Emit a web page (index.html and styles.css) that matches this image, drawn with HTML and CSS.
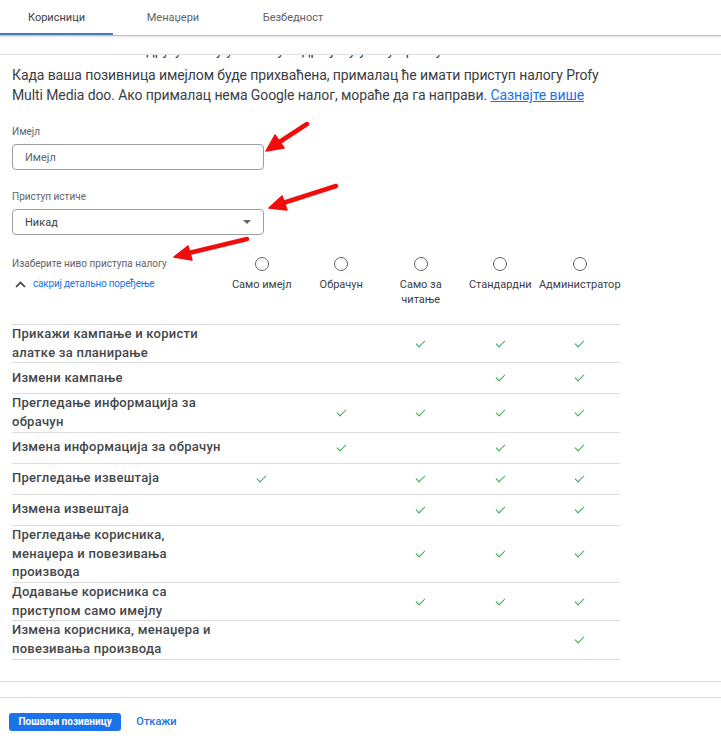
FILE: index.html
```html
<!DOCTYPE html>
<html lang="sr">
<head>
    <meta charset="UTF-8">
    <meta name="viewport" content="width=device-width, initial-scale=1.0">
    <title>Корисници</title>
    <link rel="stylesheet" href="styles.css">
</head>
<body>

    <div class="tabs">
        <div class="tab active">Корисници</div>
        <div class="tab">Менаџери</div>
        <div class="tab">Безбедност</div>
    </div>

    <div class="content">
        <!-- ред који је скоро сасвим одсечен при скроловању -->
        <div class="clipped">
            <p>Позовите другу особу у налог уз одређену улогу приступа.</p>
        </div>

        <p class="intro">Када ваша позивница имејлом буде прихваћена, прималац ће имати приступ налогу Profy Multi Media doo. Ако прималац нема Google налог, мораће да га направи. <a href="#">Сазнајте више</a></p>

        <div class="field">
            <label class="field-label" for="email">Имејл</label>
            <input type="text" id="email" class="text-input" placeholder="Имејл">
        </div>

        <div class="field">
            <div class="field-label">Приступ истиче</div>
            <div class="select">
                <span>Никад</span>
                <span class="caret"></span>
            </div>
        </div>

        <div class="access-head">
            <div class="access-left">
                <div class="field-label">Изаберите ниво приступа налогу</div>
                <a href="#" class="toggle">
                    <svg width="11" height="7" viewBox="0 0 11 7"><path d="M1 6 L5.5 1.5 L10 6" fill="none" stroke="#3c4043" stroke-width="1.7"/></svg>
                    сакриј детально поређење
                </a>
            </div>
            <div class="role"><span class="radio"></span><span class="role-name">Само имејл</span></div>
            <div class="role"><span class="radio"></span><span class="role-name">Обрачун</span></div>
            <div class="role"><span class="radio"></span><span class="role-name">Само за<br>читање</span></div>
            <div class="role"><span class="radio"></span><span class="role-name">Стандардни</span></div>
            <div class="role"><span class="radio"></span><span class="role-name">Администратор</span></div>
        </div>

        <div class="table">
            <div class="row">
                <div class="name">Прикажи кампање и користи<br>алатке за планирање</div>
                <div class="cell"></div><div class="cell"></div>
                <div class="cell check"></div><div class="cell check"></div><div class="cell check"></div>
            </div>
            <div class="row">
                <div class="name">Измени кампање</div>
                <div class="cell"></div><div class="cell"></div><div class="cell"></div>
                <div class="cell check"></div><div class="cell check"></div>
            </div>
            <div class="row">
                <div class="name">Прегледање информација за<br>обрачун</div>
                <div class="cell"></div>
                <div class="cell check"></div><div class="cell check"></div><div class="cell check"></div><div class="cell check"></div>
            </div>
            <div class="row">
                <div class="name">Измена информација за обрачун</div>
                <div class="cell"></div>
                <div class="cell check"></div><div class="cell"></div><div class="cell check"></div><div class="cell check"></div>
            </div>
            <div class="row">
                <div class="name">Прегледање извештаја</div>
                <div class="cell check"></div><div class="cell"></div>
                <div class="cell check"></div><div class="cell check"></div><div class="cell check"></div>
            </div>
            <div class="row">
                <div class="name">Измена извештаја</div>
                <div class="cell"></div><div class="cell"></div>
                <div class="cell check"></div><div class="cell check"></div><div class="cell check"></div>
            </div>
            <div class="row">
                <div class="name">Прегледање корисника,<br>менаџера и повезивања<br>производа</div>
                <div class="cell"></div><div class="cell"></div>
                <div class="cell check"></div><div class="cell check"></div><div class="cell check"></div>
            </div>
            <div class="row">
                <div class="name">Додавање корисника са<br>приступом само имејлу</div>
                <div class="cell"></div><div class="cell"></div>
                <div class="cell check"></div><div class="cell check"></div><div class="cell check"></div>
            </div>
            <div class="row">
                <div class="name">Измена корисника, менаџера и<br>повезивања производа</div>
                <div class="cell"></div><div class="cell"></div><div class="cell"></div><div class="cell"></div>
                <div class="cell check"></div>
            </div>
        </div>
    </div>

    <div class="divider"></div>

    <div class="actions">
        <button class="send">Пошаљи позивницу</button>
        <a href="#" class="cancel">Откажи</a>
    </div>

    <!-- црвене стрелице нацртане преко снимка -->
    <svg class="arrows" width="721" height="744" viewBox="0 0 721 744">
        <g fill="#f20d0d" stroke="#f20d0d" stroke-linecap="round" stroke-linejoin="round">
            <line x1="307" y1="124" x2="278" y2="143" stroke-width="4.5"/>
            <polygon points="266,151 284,148 275,135" stroke-width="1.5"/>
            <line x1="336" y1="186" x2="283" y2="203" stroke-width="4.5"/>
            <polygon points="269,208 287,210 282,196" stroke-width="1.5"/>
            <line x1="247" y1="239" x2="189" y2="253" stroke-width="4.5"/>
            <polygon points="174,257 192,260 188,246" stroke-width="1.5"/>
        </g>
    </svg>

</body>
</html>
```

FILE: styles.css
```css
body {
    margin: 0;
    font-family: 'Roboto', 'Noto Sans', sans-serif;
    color: #3c4043;
    background-color: #fff;
    position: relative;
    width: 721px;
    height: 744px;
    overflow: hidden;
}
.tabs {
    display: flex;
    height: 35px;
    border-bottom: 1px solid #bdc1c6;
    box-shadow: 0 1px 2px rgba(0, 0, 0, 0.12);
}
.tab {
    width: 120px;
    display: flex;
    align-items: center;
    justify-content: center;
    font-size: 11px;
    color: #5f6368;
}
.tab.active {
    width: 113px;
    color: #3c4043;
    box-shadow: inset 0 -2px 0 #4a7bb5;
}
.content {
    margin-top: 18px;
    border-top: 1px solid #e0e0e0;
}
.clipped {
    height: 3px;
    overflow: hidden;
}
.clipped p {
    margin: -13.5px 0 0 80px;
    font-size: 14px;
    line-height: 16px;
    white-space: nowrap;
}
.intro {
    margin: 7px 0 0 12px;
    width: 615px;
    font-size: 14px;
    line-height: 20px;
    letter-spacing: -0.1px;
}
.intro a {
    color: #1a73e8;
}
.field {
    margin: 20px 0 0 12px;
}
.field-label {
    display: block;
    font-size: 10px;
    line-height: 14px;
    color: #5f6368;
}
.text-input,
.select {
    display: flex;
    align-items: center;
    box-sizing: border-box;
    width: 252px;
    height: 26px;
    margin-top: 5px;
    padding: 0 12px;
    border: 1px solid #9aa0a6;
    border-radius: 4px;
    font-family: inherit;
    font-size: 11px;
    color: #3c4043;
}
.text-input::placeholder {
    color: #5f6368;
}
.select {
    justify-content: space-between;
}
.caret {
    width: 0;
    height: 0;
    border-left: 4px solid transparent;
    border-right: 4px solid transparent;
    border-top: 4px solid #5f6368;
}
.access-head {
    display: grid;
    grid-template-columns: 210px repeat(5, 79.5px);
    margin: 22px 0 0 12px;
    padding-bottom: 17px;
}
.toggle {
    display: flex;
    align-items: center;
    gap: 7px;
    margin-top: 6px;
    margin-left: 3px;
    font-size: 10px;
    line-height: 14px;
    letter-spacing: -0.2px;
    color: #1a73e8;
    text-decoration: none;
}
.role {
    display: flex;
    flex-direction: column;
    align-items: center;
}
.radio {
    box-sizing: border-box;
    width: 14px;
    height: 14px;
    border: 1.5px solid #5f6368;
    border-radius: 50%;
}
.role-name {
    margin-top: 6px;
    font-size: 11px;
    line-height: 15px;
    text-align: center;
    white-space: nowrap;
}
.table {
    margin-left: 12px;
    width: 607.5px;
    border-top: 1px solid #dadce0;
}
.row {
    display: grid;
    grid-template-columns: 210px repeat(5, 79.5px);
    align-items: center;
    min-height: 30px;
    border-bottom: 1px solid #dadce0;
}
.name {
    font-size: 13px;
    font-weight: 500;
    line-height: 18.7px;
    letter-spacing: 0.25px;
    white-space: nowrap;
    color: #44474a;
}
.cell {
    display: flex;
    justify-content: center;
}
.check::before {
    content: "";
    width: 8px;
    height: 4px;
    border-left: 1.6px solid #34a853;
    border-bottom: 1.6px solid #34a853;
    transform: rotate(-45deg);
    margin-top: -3px;
}
.divider {
    margin-top: 21px;
    height: 15px;
    border-top: 1px solid #dadce0;
}
.actions {
    display: flex;
    align-items: center;
    gap: 15px;
    padding: 15px 9px;
    border-top: 1px solid #dadce0;
}
.send {
    height: 18px;
    padding: 0 9.5px;
    border: none;
    border-radius: 3px;
    background-color: #1a73e8;
    color: #fff;
    font-family: inherit;
    font-size: 10px;
    font-weight: 700;
}
.cancel {
    font-size: 11px;
    font-weight: 500;
    color: #1a73e8;
    text-decoration: none;
}
.arrows {
    position: absolute;
    top: 0;
    left: 0;
    pointer-events: none;
}
```
